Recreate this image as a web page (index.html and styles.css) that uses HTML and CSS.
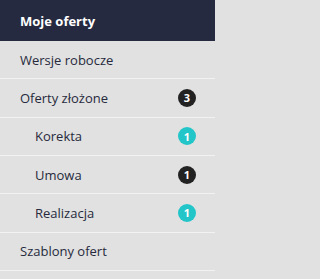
FILE: index.html
```html
<!DOCTYPE html>
<html lang="pl">
<head>
<meta charset="utf-8">
<link rel="stylesheet" href="styles.css">
</head>
<body>
<nav class="menu">
  <div class="head">Moje oferty</div>
  <div class="row">Wersje robocze</div>
  <div class="row"><span>Oferty złożone</span><span class="badge dark">3</span></div>
  <div class="row sub"><span>Korekta</span><span class="badge teal">1</span></div>
  <div class="row sub"><span>Umowa</span><span class="badge dark">1</span></div>
  <div class="row sub"><span>Realizacja</span><span class="badge teal">1</span></div>
  <div class="row">Szablony ofert</div>
</nav>
</body>
</html>
```
FILE: styles.css
```css
html, body {
  margin: 0;
  padding: 0;
  background: #e1e1e1;
}
.menu {
  width: 215px;
  font-family: "Open Sans", "Liberation Sans", sans-serif;
  font-size: 13px;
  color: #262a3c;
}
.head {
  height: 41px;
  box-sizing: border-box;
  background: #252a40;
  color: #fff;
  font-weight: 700;
  padding: 0 20px;
  display: flex;
  align-items: center;
}
.row {
  height: 38.33px;
  box-sizing: border-box;
  border-bottom: 1px solid #f2f2f2;
  padding: 0 20px;
  display: flex;
  align-items: center;
  justify-content: space-between;
}
.row.sub {
  padding-left: 35px;
}
.badge {
  width: 18px;
  height: 18px;
  border-radius: 50%;
  color: #fff;
  font-size: 11px;
  font-weight: 700;
  display: flex;
  align-items: center;
  justify-content: center;
  margin-right: -1px;
}
.badge.dark { background: #222222; }
.badge.teal { background: #22c5c8; }
```
